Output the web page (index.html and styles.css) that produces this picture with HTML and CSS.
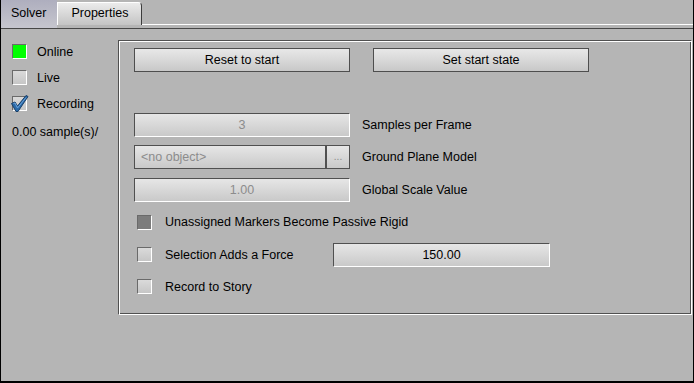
FILE: index.html
```html
<!DOCTYPE html>
<html lang="en">
<head>
  <meta charset="UTF-8" />
  <title>Solver</title>
  <link rel="stylesheet" href="styles.css">
</head>
<body>
  <div class="window">
    <div class="tabbar">
      <div class="tab active">Solver</div>
      <div class="tab">Properties</div>
      <div class="tab-fill"></div>
    </div>

    <div class="content">
      <div class="side">
        <div class="check-row">
          <span class="box box-online"></span>
          <span>Online</span>
        </div>
        <div class="check-row">
          <span class="box"></span>
          <span>Live</span>
        </div>
        <div class="check-row">
          <span class="box">
            <svg class="tick" width="18" height="18" viewBox="0 0 18 18">
              <path d="M0.5 8.5 L4 7 L6.5 11 L15 0.5 L17 1.5 L7 16.5 L5 16.5 Z" fill="#2a6aa8" stroke="#173e68" stroke-width="1"/>
              <path d="M2.5 8.5 L4 8 L6.5 13 L15 2.5" fill="none" stroke="#6aa3dc" stroke-width="1"/>
            </svg>
          </span>
          <span>Recording</span>
        </div>
        <div class="status">0.00 sample(s)/</div>
      </div>

      <div class="panel">
        <div class="btn-row">
          <div class="btn">Reset to start</div>
          <div class="btn">Set start state</div>
        </div>

        <div class="form">
          <div class="row">
            <div class="field disabled">3</div>
            <span class="label">Samples per Frame</span>
          </div>
          <div class="row">
            <div class="picker">
              <div class="picker-text">&lt;no object&gt;</div>
              <div class="picker-btn">...</div>
            </div>
            <span class="label">Ground Plane Model</span>
          </div>
          <div class="row">
            <div class="field disabled">1.00</div>
            <span class="label">Global Scale Value</span>
          </div>
          <div class="row check">
            <span class="box box-dark"></span>
            <span class="opt">Unassigned Markers Become Passive Rigid</span>
          </div>
          <div class="row check">
            <span class="box"></span>
            <span class="opt opt-fixed">Selection Adds a Force</span>
            <div class="field force">150.00</div>
          </div>
          <div class="row check">
            <span class="box"></span>
            <span class="opt">Record to Story</span>
          </div>
        </div>
      </div>
    </div>
  </div>
</body>
</html>
```

FILE: styles.css
```css
* {
  margin: 0;
  padding: 0;
  box-sizing: border-box;
}

html, body {
  height: 100%;
  background: #b5b5b5;
  font-family: "Liberation Sans", Arial, sans-serif;
  font-size: 12.5px;
  color: #000;
}

.window {
  height: 383px;
  border-left: 1px solid #000;
  border-right: 1px solid #000;
  border-bottom: 2px solid #000;
  display: flex;
  flex-direction: column;
}

/* Tabs */
.tabbar {
  display: flex;
  height: 29px;
  border-bottom: 1px solid #474747;
}

.tab {
  height: 23px;
  margin-top: 2px;
  padding: 0 13px;
  line-height: 20px;
  background: linear-gradient(#ebebeb, #c4c4c4);
  border-top: 1px solid #fff;
  border-left: 1px solid #fff;
  border-right: 1px solid #3c3c3c;
  border-top-right-radius: 4px;
}

.tab.active {
  height: 28px;
  margin-top: 0;
  padding: 0 11px 0 10px;
  line-height: 26px;
  border: none;
  border-radius: 0;
  background: linear-gradient(#aeaebe, #c6c6ce);
}

.tab-fill {
  flex: 1;
  height: 25px;
  border-bottom: 1px solid #fff;
}

/* Body */
.content {
  flex: 1;
  display: flex;
  align-items: flex-start;
}

.side {
  width: 117px;
  padding: 15px 0 0 11px;
  display: flex;
  flex-direction: column;
  gap: 11px;
}

.check-row {
  display: flex;
  align-items: center;
  gap: 10px;
  height: 15px;
}

.status {
  margin-top: 3px;
}

.box {
  position: relative;
  flex-shrink: 0;
  width: 15px;
  height: 15px;
  border-top: 1px solid #6a6a6a;
  border-left: 1px solid #6a6a6a;
  border-right: 1px solid #fff;
  border-bottom: 1px solid #fff;
  background: linear-gradient(#dadada, #c6c6c6);
}

.box-online {
  background: #00ff00;
}

.box-dark {
  background: #7c7c7c;
}

.tick {
  position: absolute;
  left: -2px;
  top: -2px;
}

.panel {
  margin-top: 11px;
  width: 574px;
  height: 275px;
  border: 1px solid #505050;
  border-right-color: #fff;
  border-bottom-color: #fff;
  box-shadow: inset 1px 1px 0 #fff, inset -1px -1px 0 #505050;
  padding: 7px 0 0 15px;
}

.btn-row {
  display: flex;
  gap: 23px;
}

.btn {
  width: 216px;
  height: 24px;
  line-height: 22px;
  text-align: center;
  border: 1px solid #4e4e4e;
  background: linear-gradient(#e8e8e8, #c8c8c8);
}

.form {
  margin-top: 41px;
  display: flex;
  flex-direction: column;
  gap: 8.4px;
}

.row {
  display: flex;
  align-items: center;
  height: 24px;
}

.label {
  margin-left: 12px;
}

.field {
  width: 216px;
  height: 24px;
  line-height: 22px;
  text-align: center;
  border-top: 1px solid #505050;
  border-left: 1px solid #505050;
  border-right: 1px solid #fff;
  border-bottom: 1px solid #fff;
  background: linear-gradient(#e6e6e6, #c9c9c9);
}

.field.disabled {
  color: #8c8c8c;
}

.picker {
  display: flex;
  width: 216px;
  height: 24px;
  border: 1px solid #505050;
  background: linear-gradient(#e6e6e6, #c9c9c9);
}

.picker-text {
  flex: 1;
  padding-left: 6px;
  line-height: 22px;
  color: #8c8c8c;
}

.picker-btn {
  width: 24px;
  border-left: 2px solid #505050;
  text-align: center;
  line-height: 22px;
  color: #8c8c8c;
  font-size: 10px;
}

.row.check {
  padding-left: 3px;
}

.opt {
  margin-left: 13px;
}

.opt-fixed {
  width: 168px;
}

.field.force {
  width: 217px;
}
```
